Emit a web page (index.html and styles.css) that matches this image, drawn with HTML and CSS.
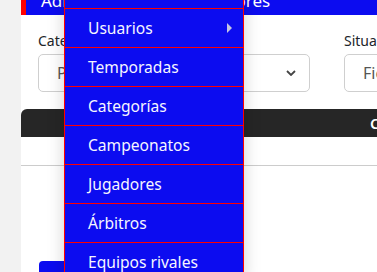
FILE: index.html
```html
<!DOCTYPE html>
<html lang="es">
<head>
    <meta charset="UTF-8">
    <meta name="viewport" content="width=device-width, initial-scale=1.0">
    <title>Jugadores</title>
    <link rel="stylesheet" href="styles.css">
</head>
<body>
    <div class="layout">
        <main class="content">
            <h2 class="page-title">Administración de jugadores</h2>

            <div class="filters">
                <div class="field">
                    <label>Categoría</label>
                    <div class="select">
                        <span>Primera división</span>
                        <svg width="10" height="6" viewBox="0 0 10 6"><polyline points="1,1 5,5 9,1" fill="none" stroke="#444" stroke-width="1.8"/></svg>
                    </div>
                </div>
                <div class="field">
                    <label>Situación</label>
                    <div class="select">
                        <span>Fichado</span>
                        <svg width="10" height="6" viewBox="0 0 10 6"><polyline points="1,1 5,5 9,1" fill="none" stroke="#444" stroke-width="1.8"/></svg>
                    </div>
                </div>
            </div>

            <div class="table">
                <div class="table-head">
                    <div>Nombre</div>
                    <div>Club</div>
                </div>
                <div class="table-row">
                    <div></div>
                    <div></div>
                </div>
            </div>

            <button class="btn">Nuevo jugador</button>
        </main>

        <!-- open admin menu -->
        <ul class="dropdown">
            <li>Inicio</li>
            <li class="has-sub">Usuarios</li>
            <li>Temporadas</li>
            <li>Categorías</li>
            <li>Campeonatos</li>
            <li>Jugadores</li>
            <li>Árbitros</li>
            <li>Equipos rivales</li>
        </ul>
    </div>
</body>
</html>
```

FILE: styles.css
```css
* {
    margin: 0;
    padding: 0;
    box-sizing: border-box;
}

body {
    font-family: 'Noto Sans', 'Open Sans', sans-serif;
    background: #f2f2f2;
    color: #212529;
    overflow: hidden;
}

.layout {
    position: relative;
    display: flow-root;
    padding-left: 21px;
    height: 272px;
}

.content {
    background: white;
    margin-top: -14px;
    height: 300px;
}

.page-title {
    background: #0c0cf0;
    border-left: 5px solid #ff0000;
    color: white;
    font-size: 17px;
    font-weight: 400;
    line-height: 29px;
    padding: 0 15px;
    white-space: nowrap;
}

.filters {
    display: grid;
    grid-template-columns: 272px 272px;
    gap: 34px;
    padding: 15px 17px 0;
}

.field label {
    display: block;
    font-size: 14px;
    line-height: 21px;
    margin-bottom: 3px;
    white-space: nowrap;
}

.select {
    display: flex;
    align-items: center;
    justify-content: space-between;
    height: 38px;
    padding: 0 13px 0 18px;
    border: 1px solid #cfcfcf;
    border-radius: 5px;
    font-size: 16px;
    color: #555;
    white-space: nowrap;
}

.table {
    margin-top: 17px;
}

.table-head {
    display: grid;
    grid-template-columns: 339px 1fr;
    background: #262626;
    color: white;
    font-size: 15px;
    font-weight: 600;
    line-height: 28px;
    border-top-left-radius: 6px;
    white-space: nowrap;
}

.table-head div:first-child {
    text-align: center;
}

.table-head div:last-child {
    padding-left: 10px;
}

.table-row {
    display: grid;
    grid-template-columns: 339px 1fr;
    height: 29px;
    border-bottom: 1px solid #cccccc;
}

.btn {
    display: block;
    margin: 95px 0 0 18px;
    padding: 0 14px 0 40px;
    height: 36px;
    background: #0c0cf0;
    color: white;
    border: none;
    border-radius: 4px;
    font-family: inherit;
    font-size: 15px;
}

.dropdown {
    position: absolute;
    top: -30px;
    left: 64px;
    width: 180px;
    list-style: none;
    background: #0c0cf0;
    border-left: 1px solid #ff0000;
    border-right: 1px solid #ff0000;
    box-shadow: 0 0 16px rgba(0,0,0,0.18);
}

.dropdown li {
    display: flex;
    align-items: center;
    justify-content: space-between;
    height: 39px;
    padding: 0 11px 0 23px;
    border-bottom: 1px solid #ff0000;
    color: #f6f6ff;
    font-size: 15.6px;
    white-space: nowrap;
}

.dropdown .has-sub::after {
    content: '';
    border-left: 5px solid #c4c4e0;
    border-top: 5px solid transparent;
    border-bottom: 5px solid transparent;
}
```
